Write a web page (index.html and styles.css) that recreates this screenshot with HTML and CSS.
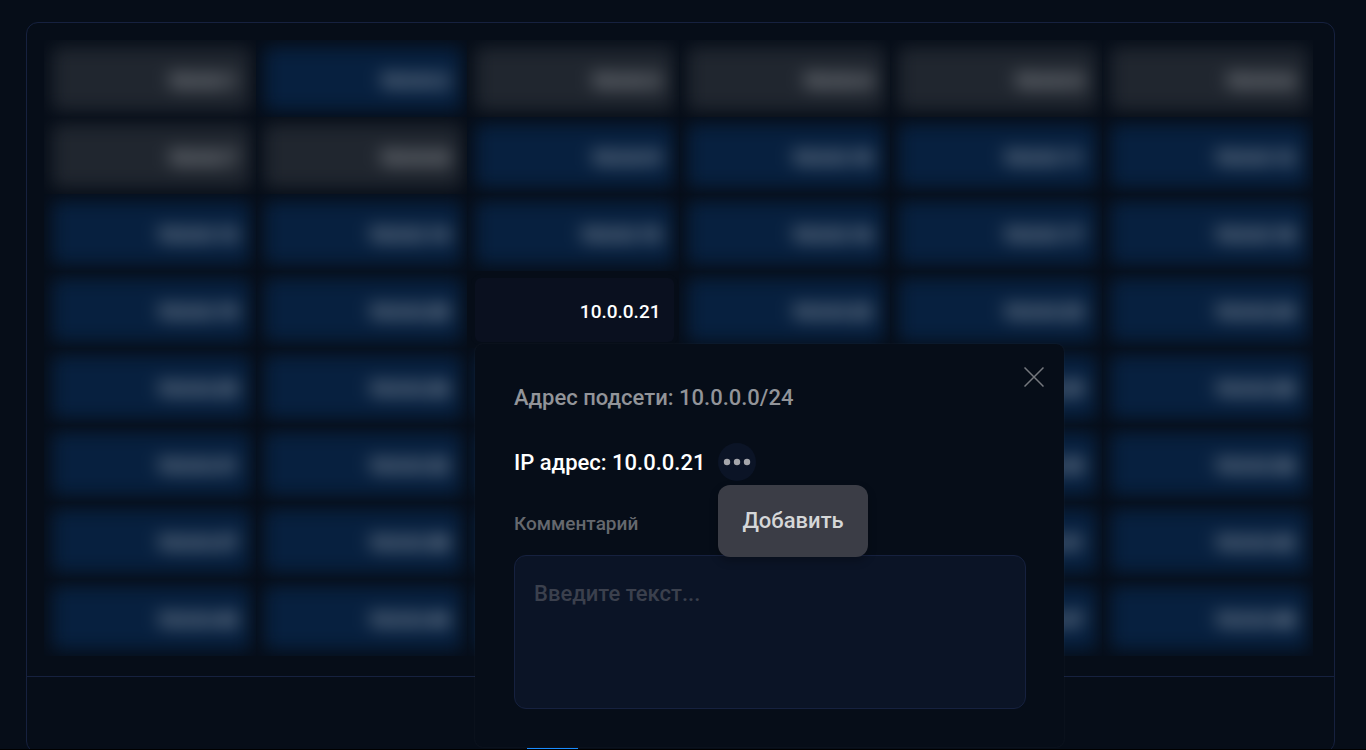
FILE: index.html
```
<!DOCTYPE html>
<html lang="ru">
<head>
  <meta charset="UTF-8" />
  <meta name="viewport" content="width=device-width, initial-scale=1.0" />
  <title>IP адреса</title>
  <link rel="stylesheet" href="styles.css">
</head>
<body>

  <main class="page">
    <section class="card">
      <div class="ip-grid" id="ipGrid"></div>
      <div class="card-footer">
        <button class="page-btn" type="button" aria-label="Страница 1"></button>
      </div>
    </section>
  </main>

  <!-- Address popover, opened under the selected cell -->
  <template id="popoverTemplate">
    <form class="popover">
      <button class="close" type="button" aria-label="Закрыть">
        <svg width="20" height="20" viewBox="0 0 20 20" fill="none" stroke="currentColor" stroke-width="1.5">
          <path d="M0.5 0.5L19.5 19.5M19.5 0.5L0.5 19.5" />
        </svg>
      </button>

      <p class="subnet">Адрес подсети: 10.0.0.0/24</p>

      <div class="ip-row">
        <span class="ip">IP адрес: 10.0.0.21</span>
        <div class="more">
          <button class="more-btn" type="button" aria-label="Действия">
            <svg width="28" height="8" viewBox="0 0 28 8" fill="currentColor">
              <circle cx="4" cy="4" r="3.2" />
              <circle cx="14" cy="4" r="3.2" />
              <circle cx="24" cy="4" r="3.2" />
            </svg>
          </button>
          <button class="menu-item" type="button">Добавить</button>
        </div>
      </div>

      <label class="comment-label" for="comment">Комментарий</label>
      <textarea class="comment" id="comment" placeholder="Введите текст..."></textarea>
    </form>
  </template>

  <script>
    const total = 48;
    const selected = 21;
    const reserved = [1, 3, 4, 5, 6, 7, 8];

    const grid = document.getElementById('ipGrid');
    const popover = document.getElementById('popoverTemplate');

    for (let i = 1; i <= total; i++) {
      const slot = document.createElement('div');
      slot.className = 'slot';

      const cell = document.createElement('button');
      cell.type = 'button';
      cell.className = 'cell';
      cell.textContent = '10.0.0.' + i;
      slot.appendChild(cell);

      if (reserved.includes(i)) {
        cell.classList.add('reserved');
      }

      if (i === selected) {
        slot.classList.add('selected');
        slot.appendChild(popover.content.cloneNode(true));
      }

      grid.appendChild(slot);
    }
  </script>

</body>
</html>
```
FILE: styles.css
```
:root {
  --bg: #060d18;
  --border: #16213f;
  --field: #0b1426;
  --free: #07203f;
  --reserved: #20262f;
  --accent: #1a8cff;
}

* {
  box-sizing: border-box;
}

body {
  margin: 0;
  font-family: Roboto, sans-serif;
  font-weight: 500;
  background: var(--bg);
  color: #fff;
}

button,
textarea {
  font: inherit;
}

button {
  border: none;
  padding: 0;
  cursor: pointer;
}

.page {
  height: 100vh;
  overflow: hidden;
  padding: 22px 31px 0 26px;
  border-bottom: 1px solid #000;
}

.card {
  border: 1px solid var(--border);
  border-radius: 12px;
}

.ip-grid {
  display: grid;
  grid-template-columns: repeat(6, 1fr);
  padding: 17px 21px 20px 17px;
}

/* every slot cuts the blur of its own cell */
.slot {
  padding: 7px 5px 6px 8px;
  overflow: hidden;
}

.cell {
  display: block;
  width: 100%;
  height: 64px;
  padding: 2px 13px 0;
  border-radius: 6px;
  background: var(--free);
  color: rgba(255, 255, 255, 0.8);
  font-size: 19px;
  text-align: right;
  filter: blur(9px);
}

.cell.reserved {
  background: var(--reserved);
}

.slot.selected {
  position: relative;
  z-index: 1;
  overflow: visible;
}

.selected .cell {
  background: #0a101f;
  color: #fff;
  filter: none;
  box-shadow: 0 0 0 4px var(--bg);
}

.card-footer {
  display: flex;
  align-items: flex-end;
  height: 76px;
  padding: 0 500px;
  border-top: 1px solid var(--border);
}

.page-btn {
  width: 51px;
  height: 4px;
  background: var(--accent);
}

.popover {
  position: absolute;
  top: 73px;
  left: 8px;
  display: flex;
  flex-direction: column;
  width: 589px;
  padding: 41px 38px 38px 39px;
  border-radius: 8px;
  background: var(--bg);
  box-shadow: 0 0 2px rgba(255, 255, 255, 0.08);
  font-size: 22px;
  line-height: 26px;
}

.close {
  position: absolute;
  top: 23px;
  right: 20px;
  width: 20px;
  height: 20px;
  background: none;
  color: #75787e;
}

.close svg {
  display: block;
}

.subnet {
  margin: 0 0 32px;
  color: #929499;
}

.ip-row {
  display: flex;
  align-items: center;
  gap: 13px;
  margin-bottom: 31px;
}

.ip {
  padding-top: 2px;
}

.more {
  position: relative;
}

.more-btn {
  display: flex;
  align-items: center;
  justify-content: center;
  width: 38px;
  height: 38px;
  border-radius: 50%;
  background: var(--field);
  color: #a5a6ab;
}

.menu-item {
  position: absolute;
  top: 42px;
  left: 0;
  padding: 23px 24px;
  border-radius: 12px;
  background: #3b3d46;
  color: #d5d7d8;
  white-space: nowrap;
  box-shadow: 0 4px 8px rgba(0, 0, 0, 0.25);
}

.comment-label {
  margin-bottom: 19px;
  color: #65686e;
  font-size: 19px;
  line-height: 24px;
}

.comment {
  height: 154px;
  padding: 25px 19px 19px;
  border: 1px solid var(--border);
  border-radius: 12px;
  background: var(--field);
  color: #fff;
  resize: none;
  outline: none;
}

.comment::placeholder {
  color: #3b404d;
  opacity: 1;
}
```
